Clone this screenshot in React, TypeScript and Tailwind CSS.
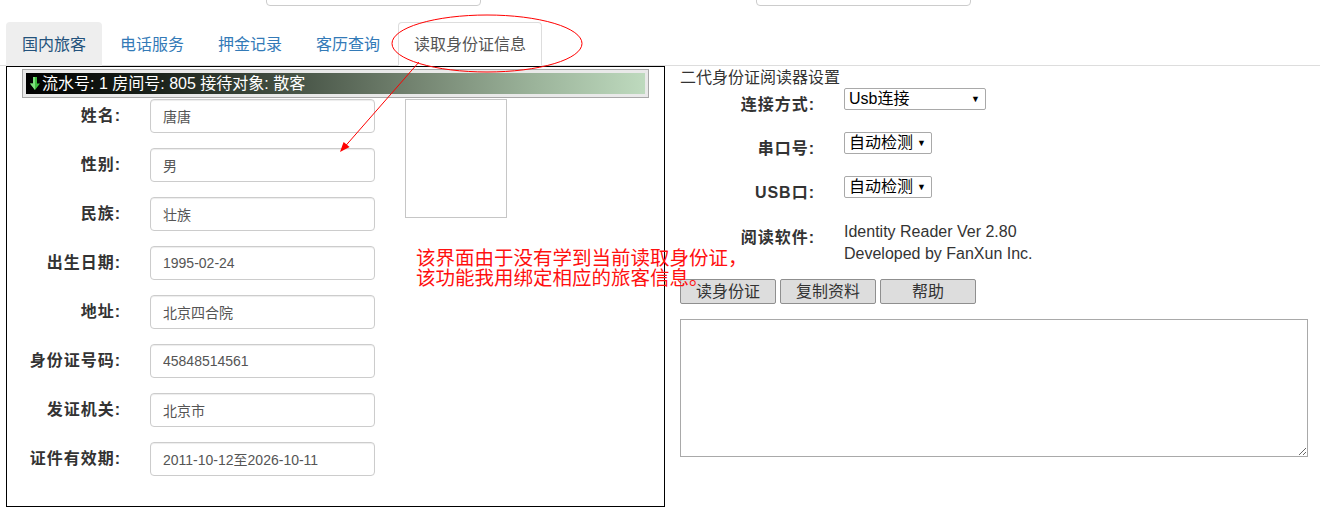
import React from "react";

const tabs = ["国内旅客", "电话服务", "押金记录", "客历查询", "读取身份证信息"];

const fields = [
  { label: "姓名:", value: "唐唐" },
  { label: "性别:", value: "男" },
  { label: "民族:", value: "壮族" },
  { label: "出生日期:", value: "1995-02-24" },
  { label: "地址:", value: "北京四合院" },
  { label: "身份证号码:", value: "45848514561" },
  { label: "发证机关:", value: "北京市" },
  { label: "证件有效期:", value: "2011-10-12至2026-10-11" },
];

function FakeSelect({ text, width }: { text: string; width: string }) {
  return (
    <div
      className={`${width} mt-[1px] flex h-[22px] items-center rounded-[2px] border border-[#a9a9a9] bg-white pl-[4px] pr-[5px] text-[16px] leading-none text-black`}
    >
      <span>{text}</span>
      <span className="ml-auto text-[9px]">▼</span>
    </div>
  );
}

export default function App() {
  return (
    <div className="relative h-[524px] w-[1320px] overflow-hidden bg-white font-['Liberation_Sans','Noto_Sans_CJK_SC',sans-serif] text-[#333]">
      {/* partial inputs above */}
      <div className="flex h-[6px] items-end overflow-hidden">
        <div className="ml-[266px] h-[34px] w-[215px] shrink-0 rounded-[4px] border border-[#ccc]" />
        <div className="ml-[275px] h-[34px] w-[215px] shrink-0 rounded-[4px] border border-[#ccc]" />
      </div>

      {/* TABS */}
      <div className="mt-[16px] flex h-[44px] border-b border-[#ddd] pl-[6px]">
        {tabs.map((t, i) => (
          <div
            key={t}
            className={`-mb-px mr-[2px] flex h-[44px] items-center rounded-t-[4px] border px-[15px] pt-[1px] text-[16px] ${
              i === 0
                ? "border-transparent bg-[#eee] text-[#23527c]"
                : i === tabs.length - 1
                ? "border-[#ddd] border-b-transparent bg-white text-[#555]"
                : "border-transparent text-[#337ab7]"
            }`}
          >
            {t}
          </div>
        ))}
      </div>

      <div className="flex">
        {/* LEFT PANEL */}
        <div className="ml-[6px] h-[441px] w-[659px] shrink-0 border border-black">
          <div className="ml-[15px] mt-[2px] w-[627px] border border-[#a8a8a8] bg-[#e9e9e9] p-[3px]">
            <div className="flex h-[21px] items-center bg-[linear-gradient(to_right,#000_0%,#1c241c_22%,#4b584a_45%,#72826f_62%,#9bb39a_82%,#bedabe_100%)] pl-[4px] text-[16px] leading-none text-white">
              <svg width="10" height="13" viewBox="0 0 10 13">
                <path d="M3 0H7V6.5H10L5 13L0 6.5H3Z" fill="#3fbf3f" />
                <path d="M3 0H5V13L0 6.5H3Z" fill="#7fe07f" />
              </svg>
              <span className="ml-[2px]">流水号: 1 房间号: 805 接待对象: 散客</span>
            </div>
          </div>

          <div className="mt-[1px] flex items-start">
            <div className="flex flex-col gap-[15px]">
              {fields.map((f) => (
                <div key={f.label} className="flex items-center">
                  <div className="w-[114px] text-right text-[16px] font-bold tracking-[1px] text-[#333]">{f.label}</div>
                  <input
                    readOnly
                    value={f.value}
                    className="ml-[29px] h-[34px] w-[225px] rounded-[4px] border border-[#ccc] px-[12px] text-[14px] text-[#555] shadow-[inset_0_1px_1px_rgba(0,0,0,0.075)] outline-none"
                  />
                </div>
              ))}
            </div>
            <div className="ml-[30px] h-[119px] w-[102px] border border-[#c6c6c6]" />
          </div>
        </div>

        {/* RIGHT PANEL */}
        <div className="ml-[15px] flex-1 pr-[12px]">
          <div className="h-[21px] pt-[1px] text-[16px] leading-[21px] text-[#333]">二代身份证阅读器设置</div>

          <div className="flex h-[44px]">
            <div className="mt-[7px] w-[135px] text-right text-[16px] font-bold leading-[22px] tracking-[1px]">连接方式:</div>
            <div className="ml-[29px]">
              <FakeSelect text="Usb连接" width="w-[142px]" />
            </div>
          </div>
          <div className="flex h-[44px]">
            <div className="mt-[7px] w-[135px] text-right text-[16px] font-bold leading-[22px] tracking-[1px]">串口号:</div>
            <div className="ml-[29px]">
              <FakeSelect text="自动检测" width="w-[88px]" />
            </div>
          </div>
          <div className="flex h-[44px]">
            <div className="mt-[7px] w-[135px] text-right text-[16px] font-bold leading-[22px] tracking-[1px]">USB口:</div>
            <div className="ml-[29px]">
              <FakeSelect text="自动检测" width="w-[88px]" />
            </div>
          </div>
          <div className="flex h-[44px]">
            <div className="mt-[8px] w-[135px] text-right text-[16px] font-bold leading-[22px] tracking-[1px]">阅读软件:</div>
            <div className="ml-[29px] pt-[2px] text-[16px] leading-[22px] text-[#333]">
              <div>Identity Reader Ver 2.80</div>
              <div>Developed by FanXun Inc.</div>
            </div>
          </div>

          <div className="mt-[16px] flex gap-[4px]">
            {["读身份证", "复制资料", "帮助"].map((b) => (
              <button
                key={b}
                className="h-[25px] w-[96px] rounded-[2px] border border-[#8f8f8f] bg-[#ddd] text-[16px] leading-none text-[#333]"
              >
                {b}
              </button>
            ))}
          </div>

          <textarea className="mt-[15px] block h-[138px] w-[628px] border border-[#a9a9a9] outline-none" />
        </div>
      </div>

      {/* annotation note */}
      <div className="absolute left-[416px] top-[248px] text-[19.5px] leading-[20px] text-[#ff1010]">
        <div>该界面由于没有学到当前读取身份证，</div>
        <div>该功能我用绑定相应的旅客信息。</div>
      </div>

      {/* annotation ellipse + arrow */}
      <svg className="pointer-events-none absolute left-0 top-0" width="1320" height="524">
        <ellipse cx="487" cy="43.5" rx="95" ry="28.5" fill="none" stroke="#ff0000" strokeWidth="1" />
        <line x1="419" y1="62" x2="345" y2="146.5" stroke="#ff0000" strokeWidth="1" />
        <polygon points="340,152 349.6,147.1 343.6,141.9" fill="#ff0000" />
      </svg>
    </div>
  );
}
